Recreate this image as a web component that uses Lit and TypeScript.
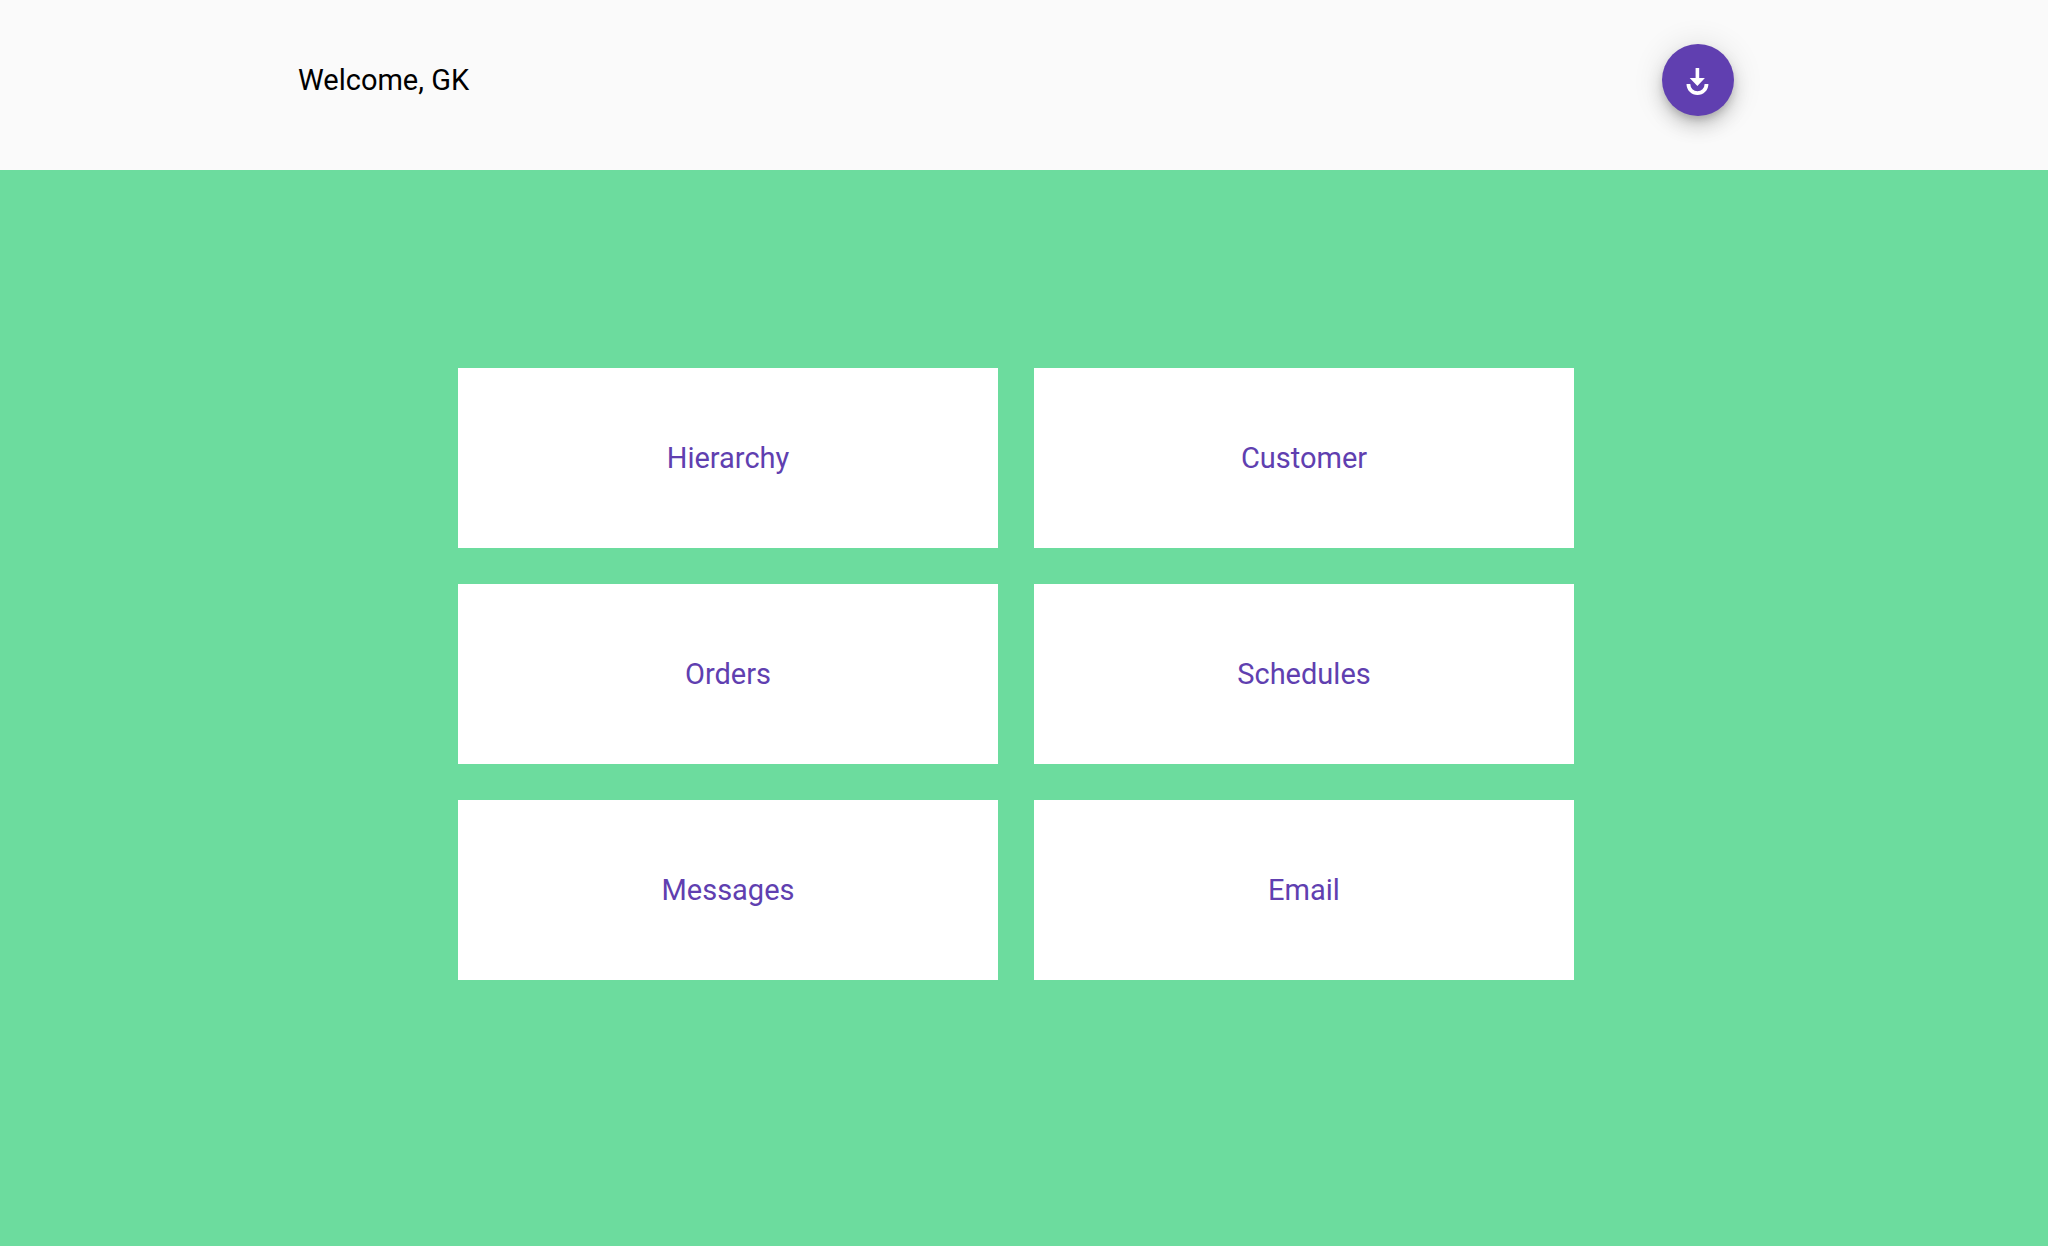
import { LitElement, html, css } from "lit";
import { customElement, property } from "lit/decorators.js";

interface Section {
  label: string;
  href: string;
}

const SECTIONS: Section[] = [
  { label: "Hierarchy", href: "#hierarchy" },
  { label: "Customer", href: "#customer" },
  { label: "Orders", href: "#orders" },
  { label: "Schedules", href: "#schedules" },
  { label: "Messages", href: "#messages" },
  { label: "Email", href: "#email" },
];

@customElement("app-root")
export class AppRoot extends LitElement {
  @property() user = "GK";

  static styles = css`
    :host {
      display: flex;
      flex-direction: column;
      min-height: 100vh;
      font-family: Roboto, "Liberation Sans", sans-serif;
      font-size: 29px;
      line-height: 36px;
      color: #000;
      background: #6cdc9e;
    }

    .header {
      display: flex;
      justify-content: center;
      padding: 44px 16px 54px 0;
      background: #fafafa;
    }

    .header-inner {
      display: flex;
      align-items: center;
      justify-content: space-between;
      width: 100%;
      max-width: 1436px;
    }

    .welcome {
      margin: 0;
      font-size: inherit;
      font-weight: 400;
    }

    .fab {
      display: flex;
      align-items: center;
      justify-content: center;
      width: 72px;
      height: 72px;
      padding: 0;
      border: 0;
      border-radius: 50%;
      background: #603fb0;
      color: #fff;
      cursor: pointer;
      box-shadow:
        0 5px 9px -2px rgba(0, 0, 0, 0.2),
        0 11px 18px 0 rgba(0, 0, 0, 0.14),
        0 2px 32px 0 rgba(0, 0, 0, 0.12);
    }

    .icon {
      display: block;
      width: 36px;
      height: 36px;
    }

    .main {
      position: relative;
      display: flex;
      flex: 1;
      align-items: center;
      justify-content: center;
      padding: 0 16px 68px 0;
      background: #6cdc9e;
    }

    .grid {
      display: grid;
      grid-template-columns: repeat(2, 1fr);
      grid-auto-rows: 180px;
      gap: 36px;
      width: 100%;
      max-width: 1116px;
    }

    .card {
      display: flex;
      align-items: center;
      justify-content: center;
      background: #fff;
      color: #603fb0;
      text-decoration: none;
    }
  `;

  render() {
    return html`
      <header class="header">
        <div class="header-inner">
          <h1 class="welcome">Welcome, ${this.user}</h1>
          <button class="fab" type="button" aria-label="Download">
            <svg class="icon" viewBox="0 0 36 36" aria-hidden="true">
              <path
                fill="currentColor"
                d="M15.6 6H19.2V16H24.9L17.4 24L9.7 16H15.6Z"
              />
              <path
                fill="none"
                stroke="currentColor"
                stroke-width="3.8"
                d="M8.4 22A9.05 9.2 0 0 0 26.5 22"
              />
            </svg>
          </button>
        </div>
      </header>
      <main class="main">
        <nav class="grid" aria-label="Sections">
          ${SECTIONS.map(
            (s) => html`<a class="card" href=${s.href}>${s.label}</a>`,
          )}
        </nav>
      </main>
    `;
  }
}
